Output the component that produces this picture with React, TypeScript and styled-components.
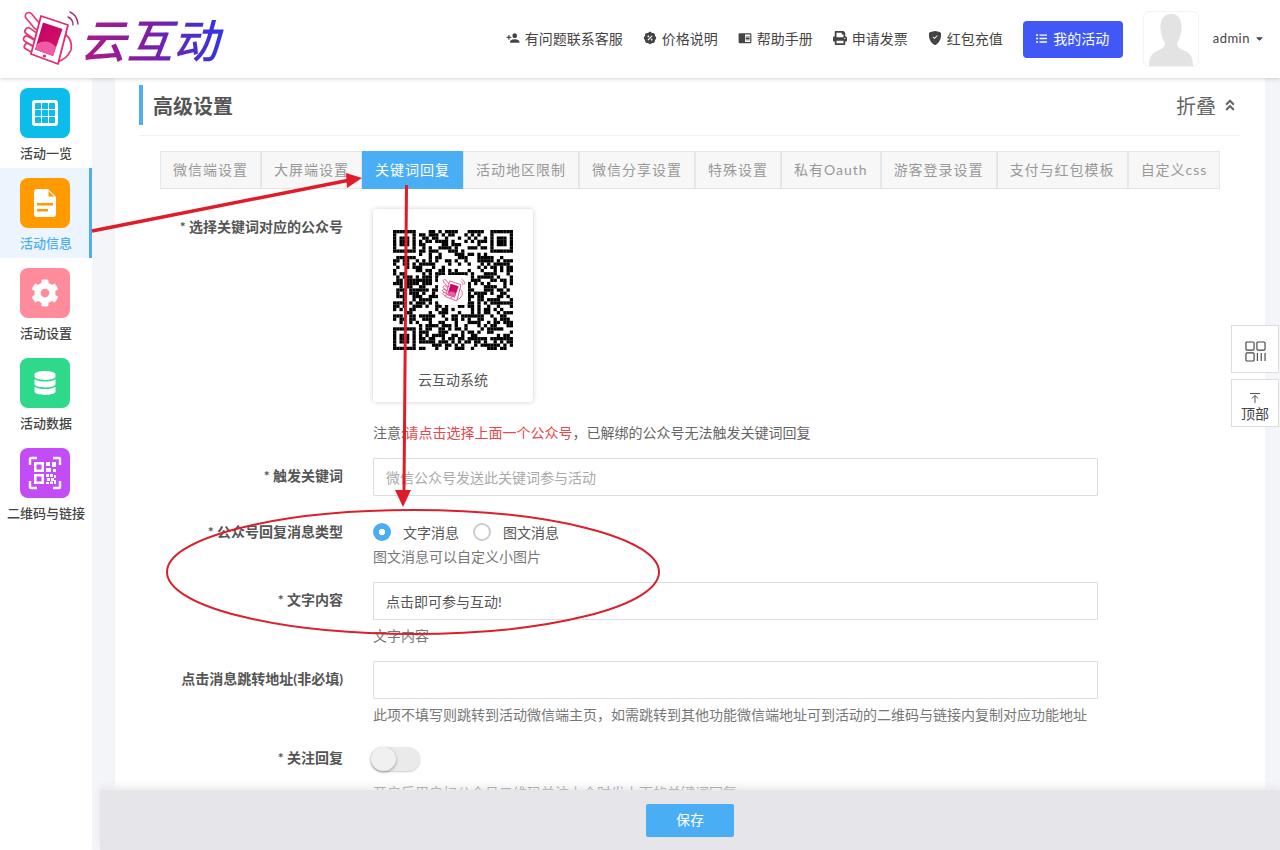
import React from 'react';
import styled, {createGlobalStyle} from 'styled-components';
import {FaPrint, FaListUl, FaCog, FaDatabase, FaAngleDoubleUp, FaCaretDown} from 'react-icons/fa';
import {MdChromeReaderMode, MdPersonAdd} from 'react-icons/md';
import {RiDiscountPercentFill} from 'react-icons/ri';
import {BsShieldFillCheck} from 'react-icons/bs';

const GlobalStyle = createGlobalStyle`
  html, body {
    margin: 0;
    height: 850px;
    overflow: hidden;
    background: #f3f5f8;
  }
  body {
    font-family: Lato, "Noto Sans CJK SC", sans-serif;
    font-size: 14px;
    color: #555;
  }
  * { box-sizing: border-box; }
`;

const LogoMark = ({size}: {size: number}) => (
    <svg width={size} height={size} viewBox="5 5 60 60" fill="none">
        <defs>
            <linearGradient id="screen" x1="0" y1="0" x2="1" y2="1">
                <stop offset="0" stopColor="#b8056c"/>
                <stop offset="1" stopColor="#e0105f"/>
            </linearGradient>
        </defs>
        <g stroke="#e5386f" strokeWidth="1.7" fill="#fff">
            <path d="M50 30 Q58 36 56 46 Q52 55 42 58" fill="none"/>
            <rect x="8" y="13.500" width="20" height="7" rx="3.500" transform="rotate(50 18 17)"/>
            <rect x="9" y="26.500" width="16" height="6.500" rx="3.250" transform="rotate(35 17 30)"/>
            <rect x="8" y="34" width="14" height="6" rx="3" transform="rotate(30 15 37)"/>
            <rect x="9" y="41" width="12" height="6" rx="3" transform="rotate(30 15 44)"/>
        </g>
        <path d="M26 12 L53 21 L43 60 L16 50 Z" fill="#fff" stroke="#e02c72" strokeWidth="1.8" strokeLinejoin="round"/>
        <path d="M28 18.500 L47.500 25 L38 52 L20 45.500 Z" fill="url(#screen)"/>
        <path d="M22 40 Q32 34 41 43 L38 52 L20 45.500 Z" fill="#f15aa6"/>
        <circle cx="29.500" cy="52" r="1.600" fill="#e02c72"/>
        <path d="M55 8 Q62 11 63 20 M53 13 Q58 15 58 21" stroke="#a0307c" strokeWidth="1.400" strokeLinecap="round"/>
    </svg>
);

const GridIcon = () => (
    <svg width="28" height="28" viewBox="0 0 28 28">
        <rect x="1" y="1" width="26" height="26" rx="3" fill="#fff"/>
        {[4, 11, 18].flatMap(y => [4, 11, 18].map(x => (
            <rect key={`${x}-${y}`} x={x} y={y} width="6" height="6" rx="0.5" fill="#0cbdec"/>
        )))}
    </svg>
);

const DocIcon = () => (
    <svg width="22" height="28" viewBox="0 0 22 28">
        <path d="M3 0 H14 L22 8 V25 Q22 28 19 28 H3 Q0 28 0 25 V3 Q0 0 3 0 Z" fill="#fff"/>
        <path d="M14.500 2 L20 7.500 H14.500 Z" fill="#ff9a00"/>
        <rect x="3" y="14" width="16" height="2.500" fill="#ff9a00"/>
        <rect x="3" y="20" width="11" height="2.500" fill="#ff9a00"/>
    </svg>
);

const ScanIcon = () => (
    <svg width="34" height="34" viewBox="0 0 34 34" fill="none">
        <path d="M2 9 V3 Q2 2 3 2 H9 M25 2 H31 Q32 2 32 3 V9 M32 25 V31 Q32 32 31 32 H25 M9 32 H3 Q2 32 2 31 V25" stroke="#fff" strokeWidth="2.400"/>
        <path d="M6 6 h10 v10 h-10 Z M8.500 8.500 v5 h5 v-5 Z M6 18 h10 v10 h-10 Z M8.500 20.500 v5 h5 v-5 Z" fill="#fff" fillRule="evenodd"/>
        <path d="M18 6 h4 v4 h-4 Z M24 6 h4 v5 h-4 Z M18 12 h5 v4 h-5 Z M25 13 h3 v3 h-3 Z M18 18 h3 v3 h-3 Z M22 18 h3 v3 h-3 Z M26 19 h2 v3 h-2 Z M19 22 h3 v3 h-3 Z M23 22 h3 v3 h-3 Z M18 26 h3 v2 h-3 Z M22 25.500 h3 v2.500 h-3 Z M26 24 h2 v4 h-2 Z" fill="#fff"/>
    </svg>
);

const QR_SIZE = 37;

const isFinder = (x: number, y: number) => {
    const near = (a: number, b: number) => a < 8 && b < 8;
    return near(x, y) || near(QR_SIZE - 1 - x, y) || near(x, QR_SIZE - 1 - y);
};

const finderCell = (x: number, y: number) => {
    const fx = x < 8 ? x : QR_SIZE - 1 - x;
    const fy = y < 8 ? y : QR_SIZE - 1 - y;
    if (fx === 7 || fy === 7) return false;
    if (fx === 0 || fy === 0 || fx === 6 || fy === 6) return true;
    return fx >= 2 && fx <= 4 && fy >= 2 && fy <= 4;
};

// not a readable code, only the look of one
const qrCells = (() => {
    const cells: [number, number][] = [];
    let seed = 20231;
    for (let y = 0; y < QR_SIZE; y++) {
        for (let x = 0; x < QR_SIZE; x++) {
            seed = (seed * 1103515245 + 12345) & 0x7fffffff;
            const inLogo = x >= 14 && x <= 22 && y >= 14 && y <= 22;
            const on = isFinder(x, y) ? finderCell(x, y) : !inLogo && (seed >> 12) % 100 < 54;
            if (on) cells.push([x, y]);
        }
    }
    return cells;
})();

const QrCode = () => (
    <QrBox>
        <svg width="120" height="120" viewBox={`0 0 ${QR_SIZE} ${QR_SIZE}`}>
            {qrCells.map(([x, y]) => <rect key={`${x}-${y}`} x={x} y={y} width="1.02" height="1.02" fill="#000"/>)}
        </svg>
        <QrLogo><LogoMark size={25}/></QrLogo>
    </QrBox>
);

const navLinks = [
    {icon: <MdPersonAdd/>, text: '有问题联系客服'},
    {icon: <RiDiscountPercentFill/>, text: '价格说明'},
    {icon: <MdChromeReaderMode/>, text: '帮助手册'},
    {icon: <FaPrint/>, text: '申请发票'},
    {icon: <BsShieldFillCheck/>, text: '红包充值'},
];

const menu = [
    {color: '#0cbdec', icon: <GridIcon/>, text: '活动一览'},
    {color: '#ff9a00', icon: <DocIcon/>, text: '活动信息', active: true},
    {color: '#ff8b9b', icon: <FaCog size={28}/>, text: '活动设置'},
    {color: '#2fd98a', icon: <FaDatabase size={24}/>, text: '活动数据'},
    {color: '#c44cf6', icon: <ScanIcon/>, text: '二维码与链接'},
];

const tabs = ['微信端设置', '大屏端设置', '关键词回复', '活动地区限制', '微信分享设置', '特殊设置', '私有Oauth', '游客登录设置', '支付与红包模板', '自定义css'];

export default function App() {
    return (
        <Page>
            <GlobalStyle/>
            <Header>
                <Brand>
                    <LogoMark size={60}/>
                    <BrandName>云互动</BrandName>
                </Brand>
                <Nav>
                    {navLinks.map(link => (
                        <NavLink key={link.text}>{link.icon}{link.text}</NavLink>
                    ))}
                    <MyButton><FaListUl size={11}/>我的活动</MyButton>
                    <Avatar>
                        <svg width="44" height="52" viewBox="0 0 44 52" fill="#e3e3e3">
                            <path d="M22 0 C31 0 33 8 32.5 15 C32 21 30 26 28 29 C28 33 31 35 36 37 C41 39 44 43 44 52 H0 C0 43 3 39 8 37 C13 35 16 33 16 29 C14 26 12 21 11.5 15 C11 8 13 0 22 0 Z"/>
                        </svg>
                    </Avatar>
                    <UserName>admin<FaCaretDown size={11}/></UserName>
                </Nav>
            </Header>
            <Body>
                <Sidebar>
                    {menu.map(item => (
                        <MenuItem key={item.text} $active={item.active}>
                            <MenuIcon $color={item.color}>{item.icon}</MenuIcon>
                            <MenuLabel>{item.text}</MenuLabel>
                        </MenuItem>
                    ))}
                </Sidebar>
                <Main>
                    <Card>
                        <TitleRow>
                            <Title>高级设置</Title>
                            <Fold>折叠<FaAngleDoubleUp size={14}/></Fold>
                        </TitleRow>
                        <Tabs>
                            {tabs.map(tab => (
                                <Tab key={tab} $active={tab === '关键词回复'}>{tab}</Tab>
                            ))}
                        </Tabs>
                        <Form>
                            <Field $gap={15}>
                                <Label>* 选择关键词对应的公众号</Label>
                                <Control>
                                    <QrCard>
                                        <QrCode/>
                                        <QrName>云互动系统</QrName>
                                    </QrCard>
                                    <Note>注意:<Warn>请点击选择上面一个公众号</Warn>，已解绑的公众号无法触发关键词回复</Note>
                                </Control>
                            </Field>
                            <Field $gap={26}>
                                <Label>* 触发关键词</Label>
                                <Input placeholder="微信公众号发送此关键词参与活动" readOnly/>
                            </Field>
                            <Field $gap={15}>
                                <Label $top={0}>* 公众号回复消息类型</Label>
                                <Control>
                                    <RadioRow>
                                        <Radio $checked/>
                                        <RadioText>文字消息</RadioText>
                                        <Radio/>
                                        <RadioText>图文消息</RadioText>
                                    </RadioRow>
                                    <Hint $top={5}>图文消息可以自定义小图片</Hint>
                                </Control>
                            </Field>
                            <Field $gap={15}>
                                <Label>* 文字内容</Label>
                                <Control>
                                    <Input value="点击即可参与互动!" readOnly/>
                                    <Hint>文字内容</Hint>
                                </Control>
                            </Field>
                            <Field $gap={22}>
                                <Label>点击消息跳转地址(非必填)</Label>
                                <Control>
                                    <Input readOnly/>
                                    <Hint>此项不填写则跳转到活动微信端主页，如需跳转到其他功能微信端地址可到活动的二维码与链接内复制对应功能地址</Hint>
                                </Control>
                            </Field>
                            <Field $gap={0}>
                                <Label $top={1}>* 关注回复</Label>
                                <Control>
                                    <Toggle><Knob/></Toggle>
                                    <Hint $top={12}>开启后用户扫公众号二维码关注上个时发上面的关键词回复</Hint>
                                </Control>
                            </Field>
                        </Form>
                    </Card>
                </Main>
            </Body>
            <SaveBar><SaveButton>保存</SaveButton></SaveBar>
            <FloatTools>
                <FloatBox $top={4}>
                    <svg width="21" height="21" viewBox="0 0 22 22" fill="none" stroke="#444" strokeWidth="1.2">
                        <rect x="1" y="1" width="8.5" height="8.5" rx="1"/>
                        <rect x="12.5" y="1" width="8.5" height="8.5" rx="1"/>
                        <rect x="1" y="12.5" width="8.5" height="8.5" rx="1"/>
                        <path d="M13 12.5 V21 M17 12.5 V21 M21 12.5 V21"/>
                    </svg>
                </FloatBox>
                <FloatBox $top={10}>
                    <svg width="10" height="10" viewBox="0 0 10 10" fill="none" stroke="#555">
                        <path d="M0 .5 H10 M5 10 V2.5 M1.8 5.5 L5 2.5 L8.2 5.5"/>
                    </svg>
                    顶部
                </FloatBox>
            </FloatTools>
            <Annotations width="1280" height="850" viewBox="0 0 1280 850" fill="none">
                <path d="M92 231 L350 180" stroke="#e01b2a" strokeWidth="3.500"/>
                <path d="M362 178 L346 173 L347 188 Z" fill="#e01b2a"/>
                <path d="M406.500 185 L404 492" stroke="#e01b2a" strokeWidth="3"/>
                <path d="M403 507 L395 490 L411 490 Z" fill="#e01b2a"/>
                <ellipse cx="413" cy="572" rx="246" ry="62" stroke="#d9202e" strokeWidth="2"/>
            </Annotations>
        </Page>
    );
}

const Page = styled.div`
  position: relative;
  width: 1280px;
  height: 850px;
  overflow: hidden;
`;

const Header = styled.header`
  position: relative;
  z-index: 2;
  height: 78px;
  display: flex;
  align-items: center;
  justify-content: space-between;
  padding: 0 15px 0 20px;
  background: #fff;
  box-shadow: 0 1px 4px rgba(0, 0, 0, .18);
`;

const Brand = styled.div`
  display: flex;
  align-items: center;
`;

const BrandName = styled.span`
  font-family: "Noto Sans CJK SC", sans-serif;
  font-size: 46px;
  line-height: 56px;
  font-weight: 500;
  font-style: italic;
  letter-spacing: .5px;
  padding: 0 4px 3px 0;
  background: linear-gradient(90deg, #b01a86 0%, #7a1fa8 50%, #2f36e6 100%);
  -webkit-background-clip: text;
  background-clip: text;
  color: transparent;
`;

const Nav = styled.nav`
  display: flex;
  align-items: center;
`;

const NavLink = styled.a`
  display: flex;
  align-items: center;
  gap: 5px;
  margin-right: 20px;
  padding-bottom: 2px;
  color: #444;
  font-size: 14px;

  svg {
    width: 14px;
    height: 14px;
    flex-shrink: 0;
  }
`;

const MyButton = styled.button`
  width: 100px;
  height: 37px;
  padding: 0 0 2px;
  display: flex;
  align-items: center;
  justify-content: center;
  gap: 6px;
  border: 0;
  border-radius: 4px;
  background: #4059f6;
  color: #fff;
  font: inherit;
`;

const Avatar = styled.div`
  width: 56px;
  height: 56px;
  margin: 0 14px 0 20px;
  display: flex;
  align-items: flex-end;
  justify-content: center;
  border: 1px solid #f3f3f3;
  border-radius: 6px;
`;

const UserName = styled.div`
  display: flex;
  align-items: center;
  gap: 4px;
  padding-bottom: 2px;
  font-size: 13px;
  letter-spacing: .5px;
  color: #444;
`;

const Body = styled.div`
  display: flex;
  height: 772px;
`;

const Sidebar = styled.aside`
  width: 92px;
  flex-shrink: 0;
  background: #fff;
`;

const MenuItem = styled.a<{ $active?: boolean }>`
  height: 90px;
  padding-top: 10px;
  display: flex;
  flex-direction: column;
  align-items: center;
  gap: 5px;
  font-size: 13px;
  font-weight: 500;
  line-height: 20px;
  white-space: nowrap;
  color: ${props => props.$active ? '#4eaef0' : '#444'};
  background: ${props => props.$active ? '#ecf5fd' : '#fff'};
  border-right: 3px solid ${props => props.$active ? '#4eaef0' : 'transparent'};
`;

const MenuIcon = styled.span<{ $color: string }>`
  width: 50px;
  height: 50px;
  flex-shrink: 0;
  display: flex;
  align-items: center;
  justify-content: center;
  border-radius: 8px;
  color: #fff;
  background: ${props => props.$color};
`;

const MenuLabel = styled.span`
  padding-left: 3px;
`;

const Main = styled.main`
  flex: 1;
  padding: 0 15px 0 23px;
`;

const Card = styled.section`
  height: 100%;
  padding: 7px 25px 0 24px;
  background: #fff;
`;

const TitleRow = styled.div`
  display: flex;
  align-items: center;
  justify-content: space-between;
  padding-bottom: 10px;
  border-bottom: 1px solid #f2f2f2;
`;

const Title = styled.h2`
  margin: 0;
  height: 40px;
  padding-left: 10px;
  border-left: 4px solid #4eaef0;
  font-size: 20px;
  line-height: 42px;
  font-weight: 700;
  color: #555;
`;

const Fold = styled.div`
  display: flex;
  align-items: center;
  gap: 7px;
  padding-right: 3px;
  font-size: 20px;
  color: #666;
`;

const Tabs = styled.div`
  display: flex;
  margin: 15px 0 20px 21px;
`;

const Tab = styled.a<{ $active?: boolean }>`
  height: 38px;
  padding: 0 12px 2px;
  display: flex;
  align-items: center;
  white-space: nowrap;
  font-size: 14px;
  letter-spacing: 1px;
  border: 1px solid ${props => props.$active ? '#4aaef5' : '#e6e6e6'};
  background: ${props => props.$active ? '#4aaef5' : '#f7f7f7'};
  color: ${props => props.$active ? '#fff' : '#999'};
`;

const Form = styled.form`
  display: flex;
  flex-direction: column;
`;

const Field = styled.div<{ $gap: number }>`
  display: grid;
  grid-template-columns: 204px 725px;
  column-gap: 30px;
  margin-bottom: ${props => props.$gap}px;
`;

const Label = styled.label<{ $top?: number }>`
  padding-top: ${props => props.$top ?? 8}px;
  line-height: 20px;
  text-align: right;
  font-weight: 700;
  font-size: 14px;
  color: #555;
  white-space: nowrap;
`;

const Control = styled.div`
  display: flex;
  flex-direction: column;
  align-items: flex-start;
`;

const QrCard = styled.div`
  width: 160px;
  height: 193px;
  padding-top: 21px;
  display: flex;
  flex-direction: column;
  align-items: center;
  border-radius: 3px;
  box-shadow: 0 0 5px rgba(0, 0, 0, .2);
`;

const QrBox = styled.div`
  position: relative;
  width: 120px;
  height: 120px;
`;

const QrLogo = styled.span`
  position: absolute;
  left: 45px;
  top: 45px;
  width: 30px;
  height: 30px;
  display: flex;
  align-items: center;
  justify-content: center;
  background: #fff;
  border-radius: 4px;
  box-shadow: 0 0 2px rgba(0, 0, 0, .25);
`;

const QrName = styled.div`
  margin-top: 20px;
  line-height: 20px;
  color: #555;
`;

const Note = styled.div`
  margin-top: 21px;
  line-height: 20px;
  color: #666;
`;

const Warn = styled.span`
  color: #e8474c;
`;

const Input = styled.input`
  width: 725px;
  height: 38px;
  padding: 0 12px;
  border: 1px solid #ddd;
  border-radius: 1px;
  outline: 0;
  font: inherit;
  color: #555;
  &::placeholder {
    color: #aaa;
  }
`;

const RadioRow = styled.div`
  display: flex;
  align-items: center;
  height: 20px;
`;

const Radio = styled.span<{ $checked?: boolean }>`
  width: 18px;
  height: 18px;
  margin-right: 12px;
  border-radius: 50%;
  background: ${props => props.$checked ? 'radial-gradient(circle, #fff 3px, #4aaef5 3.5px)' : '#fff'};
  border: ${props => props.$checked ? '0' : '2px solid #ccc'};
`;

const RadioText = styled.span`
  margin-right: 14px;
  padding-bottom: 1px;
  color: #555;
`;

const Hint = styled.div<{ $top?: number }>`
  margin-top: ${props => props.$top ?? 6}px;
  line-height: 20px;
  color: #777;
  white-space: nowrap;
`;

const Toggle = styled.div`
  width: 49px;
  height: 24px;
  margin-left: -2px;
  border-radius: 12px;
  background: #eaeaea;
  box-shadow: 0 1px 2px rgba(0, 0, 0, .2);
`;

const Knob = styled.div`
  width: 25px;
  height: 24px;
  border-radius: 50%;
  background: #f0f0f0;
  box-shadow: 0 1px 3px rgba(0, 0, 0, .35);
`;

const SaveBar = styled.div`
  position: absolute;
  left: 100px;
  right: 0;
  bottom: 0;
  height: 60px;
  z-index: 3;
  padding-left: 546px;
  display: flex;
  align-items: center;
  background: #e6e6ea;
  box-shadow: 0 -4px 6px rgba(230, 230, 234, .7);
`;

const SaveButton = styled.button`
  width: 88px;
  height: 33px;
  padding: 0 0 2px;
  border: 0;
  border-radius: 2px;
  background: #4aaef5;
  color: #fff;
  font: inherit;
`;

const FloatTools = styled.div`
  position: absolute;
  right: 1px;
  top: 325px;
  z-index: 3;
  display: flex;
  flex-direction: column;
  gap: 6px;
`;

const FloatBox = styled.div<{ $top: number }>`
  width: 48px;
  height: 48px;
  padding-top: ${props => props.$top}px;
  display: flex;
  flex-direction: column;
  align-items: center;
  justify-content: center;
  gap: 2px;
  background: #fff;
  border: 1px solid #ddd;
  line-height: 18px;
  color: #444;
`;

const Annotations = styled.svg`
  position: absolute;
  left: 0;
  top: 0;
  z-index: 4;
  pointer-events: none;
`;
